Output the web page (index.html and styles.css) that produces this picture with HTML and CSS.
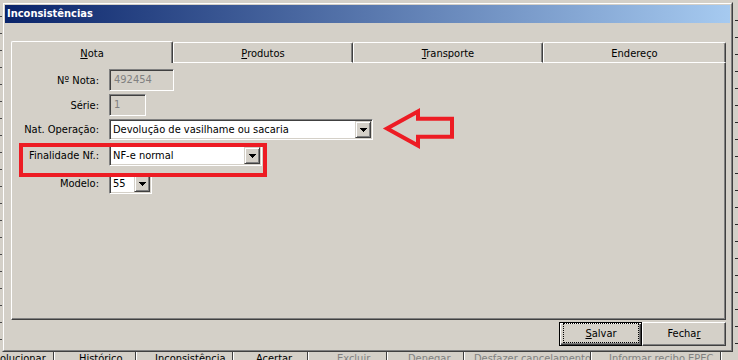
FILE: index.html
```html
<!DOCTYPE html>
<html lang="pt-BR">
<head>
<meta charset="utf-8">
<title>Inconsistências</title>
<link rel="stylesheet" href="styles.css">
</head>
<body>
<div class="desktop">
  <div class="window">
    <div class="frame">
      <div class="titlebar"><span class="title">Inconsistências</span></div>
      <div class="client">
        <div class="tabs">
          <div class="tab tab-active w-nota"><u>N</u>ota</div>
          <div class="tab w-prod"><u>P</u>rodutos</div>
          <div class="tab w-trans"><u>T</u>ransporte</div>
          <div class="tab w-end">Endereço</div>
        </div>
        <div class="panel">
          <div class="row">
            <span class="lbl">Nº Nota:</span>
            <div class="edit edit-disabled w-nota-edit">492454</div>
          </div>
          <div class="row">
            <span class="lbl">Série:</span>
            <div class="edit edit-disabled w-serie">1</div>
          </div>
          <div class="row">
            <span class="lbl">Nat. Operação:</span>
            <div class="combo w-nat">
              <span class="combo-text">Devolução de vasilhame ou sacaria</span>
              <span class="combo-btn"><svg width="7" height="4" viewBox="0 0 7 4" shape-rendering="crispEdges"><rect x="0" y="0" width="7" height="1"/><rect x="1" y="1" width="5" height="1"/><rect x="2" y="2" width="3" height="1"/><rect x="3" y="3" width="1" height="1"/></svg></span>
            </div>
          </div>
          <div class="row row-fin">
            <span class="lbl">Finalidade Nf.:</span>
            <div class="combo w-fin">
              <span class="combo-text">NF-e normal</span>
              <span class="combo-btn"><svg width="7" height="4" viewBox="0 0 7 4" shape-rendering="crispEdges"><rect x="0" y="0" width="7" height="1"/><rect x="1" y="1" width="5" height="1"/><rect x="2" y="2" width="3" height="1"/><rect x="3" y="3" width="1" height="1"/></svg></span>
            </div>
          </div>
          <div class="row row-mod">
            <span class="lbl">Modelo:</span>
            <div class="combo w-mod">
              <span class="combo-text">55</span>
              <span class="combo-btn"><svg width="7" height="4" viewBox="0 0 7 4" shape-rendering="crispEdges"><rect x="0" y="0" width="7" height="1"/><rect x="1" y="1" width="5" height="1"/><rect x="2" y="2" width="3" height="1"/><rect x="3" y="3" width="1" height="1"/></svg></span>
            </div>
          </div>
        </div>
        <div class="buttons">
          <button class="btn btn-default"><span class="focus"><u>S</u>alvar</span></button>
          <button class="btn btn-fechar">Fecha<u>r</u></button>
        </div>
      </div>
    </div>
  </div>
  <div class="taskrow">
    <span class="tb tb1">olucionar</span>
    <span class="tb tb2">Histórico</span>
    <span class="tb tb3">Inconsistência</span>
    <span class="tb tb4">Acertar</span>
    <span class="tb tb5 tb-off">Excluir</span>
    <span class="tb tb6 tb-off">Denegar</span>
    <span class="tb tb7 tb-off">Desfazer cancelamento</span>
    <span class="tb tb8 tb-off">Informar recibo EPEC</span>
    <span class="tb tb9"></span>
  </div>
  <div class="annot-box"></div>
  <svg class="annot-arrow" width="80" height="46" viewBox="0 0 80 46"><path d="M7 23.5 L38 6.5 L38 13.7 L72 13.7 L72 31.7 L38 31.7 L38 40.5 Z" fill="none" stroke="#ed1c24" stroke-width="4" stroke-linejoin="miter"/></svg>
</div>
</body>
</html>
```
FILE: styles.css
```css
* { box-sizing: border-box; }
html, body { margin: 0; padding: 0; }
body {
  width: 738px;
  height: 360px;
  overflow: hidden;
  background: #d4d0c8;
  font-family: "DejaVu Sans Condensed", "DejaVu Sans", sans-serif;
  font-stretch: condensed;
  font-size: 11px;
  color: #000;
}
.desktop {
  position: relative;
  width: 738px;
  height: 360px;
  overflow: hidden;
  padding: 2px 0 0 2px;
  background:
    repeating-linear-gradient(to bottom, transparent 0 16px, #4a4a4a 16px 17px) left top / 2px 352px no-repeat,
    repeating-linear-gradient(to bottom, transparent 0 16px, #2a2a2a 16px 17px) right 0 top 4px / 3px 348px no-repeat,
    #d4d0c8;
}
.window {
  width: 731px;
  height: 350px;
  border: 1px solid;
  border-color: #d4d0c8 #404040 #404040 #d4d0c8;
  background: #d4d0c8;
}
.frame {
  height: 100%;
  border: 1px solid;
  border-color: #fff #808080 #808080 #fff;
  padding: 1px;
  display: flex;
  flex-direction: column;
}
.titlebar {
  height: 18px;
  flex: 0 0 18px;
  background: linear-gradient(to right, #0a246a, #a6caf0);
  color: #fff;
  font-weight: bold;
  line-height: 18px;
  padding-left: 2px;
}
.client {
  flex: 1;
  display: flex;
  flex-direction: column;
  padding: 18px 4px 3px 6px;
}
.tabs {
  display: flex;
  align-items: flex-end;
  height: 22px;
}
.tab {
  height: 21px;
  border-top: 1px solid #fff;
  border-left: 1px solid #fff;
  border-right: 1px solid #404040;
  border-bottom: 1px solid #fff;
  border-radius: 2px 2px 0 0;
  box-shadow: inset -1px 0 #808080;
  text-align: center;
  line-height: 13px;
  padding-top: 4px;
}
.tab-active {
  height: 22px;
  border-bottom: none;
  padding-top: 5px;
}
.w-nota { width: 162px; }
.w-prod { width: 180px; }
.w-trans { width: 190px; }
.w-end { width: 183px; }
.panel {
  height: 257px;
  flex: 0 0 257px;
  border-left: 1px solid #fff;
  border-right: 1px solid #404040;
  border-bottom: 1px solid #404040;
  box-shadow: inset -1px -1px #808080;
  padding-top: 6px;
  display: flex;
  flex-direction: column;
}
.row {
  display: flex;
  align-items: center;
  gap: 10px;
}
.row + .row { margin-top: 3px; }
.row.row-fin { margin-top: 5px; }
.row.row-mod { margin-top: 7px; }
.lbl {
  width: 87px;
  text-align: right;
  white-space: nowrap;
}
.edit, .combo {
  border: 1px solid;
  border-color: #808080 #fff #fff #808080;
  box-shadow: inset 1px 1px #404040, inset -1px -1px #d4d0c8;
  padding: 1px;
}
.edit {
  height: 22px;
  line-height: 18px;
  padding-left: 4px;
}
.edit-disabled {
  background: #d4d0c8;
  color: #808080;
}
.w-nota-edit { width: 65px; }
.w-serie { width: 37px; }
.combo {
  height: 21px;
  background: #fff;
  display: flex;
}
.combo-text {
  flex: 1;
  padding-left: 2px;
  line-height: 17px;
  white-space: nowrap;
  overflow: hidden;
}
.combo-btn {
  width: 16px;
  height: 17px;
  flex: 0 0 16px;
  background: #d4d0c8;
  border: 1px solid;
  border-color: #d4d0c8 #404040 #404040 #d4d0c8;
  box-shadow: inset 1px 1px #fff, inset -1px -1px #808080;
  display: flex;
  align-items: center;
  justify-content: center;
}
.combo-btn svg { display: block; fill: #000; }
.w-nat { width: 264px; }
.w-fin { width: 153px; }
.w-mod { width: 43px; }
.buttons {
  display: flex;
  justify-content: flex-end;
  margin-top: 2px;
}
.btn {
  height: 24px;
  font: inherit;
  color: #000;
  background: #d4d0c8;
  padding: 0;
  margin: 0;
  text-align: center;
}
.btn-default {
  width: 83px;
  border: 1px solid #000;
  box-shadow: inset 1px 1px #fff, inset -1px -1px #404040, inset -2px -2px #808080;
  padding: 0 2px 2px 3px;
  display: flex;
}
.focus {
  flex: 1;
  border: 1px dotted #000;
  line-height: 19px;
}
.btn-fechar {
  width: 84px;
  border: 1px solid;
  border-color: #fff #404040 #404040 #fff;
  box-shadow: inset -1px -1px #808080;
  line-height: 20px;
}
.taskrow {
  display: flex;
  margin-left: -2px;
  height: 8px;
  line-height: 13px;
  white-space: nowrap;
}
.tb {
  border-right: 1px solid #404040;
  box-shadow: inset 1px 0 #fff;
  height: 13px;
  overflow: hidden;
}
.tb-off { color: #808080; }
.tb1 { width: 54px; padding-left: 0; box-shadow: none; }
.tb2 { width: 82px; padding-left: 25px; }
.tb3 { width: 97px; padding-left: 19px; }
.tb4 { width: 75px; padding-left: 23px; }
.tb5 { width: 79px; padding-left: 29px; }
.tb6 { width: 77px; padding-left: 21px; }
.tb7 { width: 127px; padding-left: 10px; }
.tb8 { width: 130px; padding-left: 18px; }
.tb9 { flex: 1; border-right: none; }
.annot-box {
  position: absolute;
  left: 19px;
  top: 143px;
  width: 248px;
  height: 34px;
  border: 4px solid #ed1c24;
}
.annot-arrow {
  position: absolute;
  left: 380px;
  top: 105px;
}
```
